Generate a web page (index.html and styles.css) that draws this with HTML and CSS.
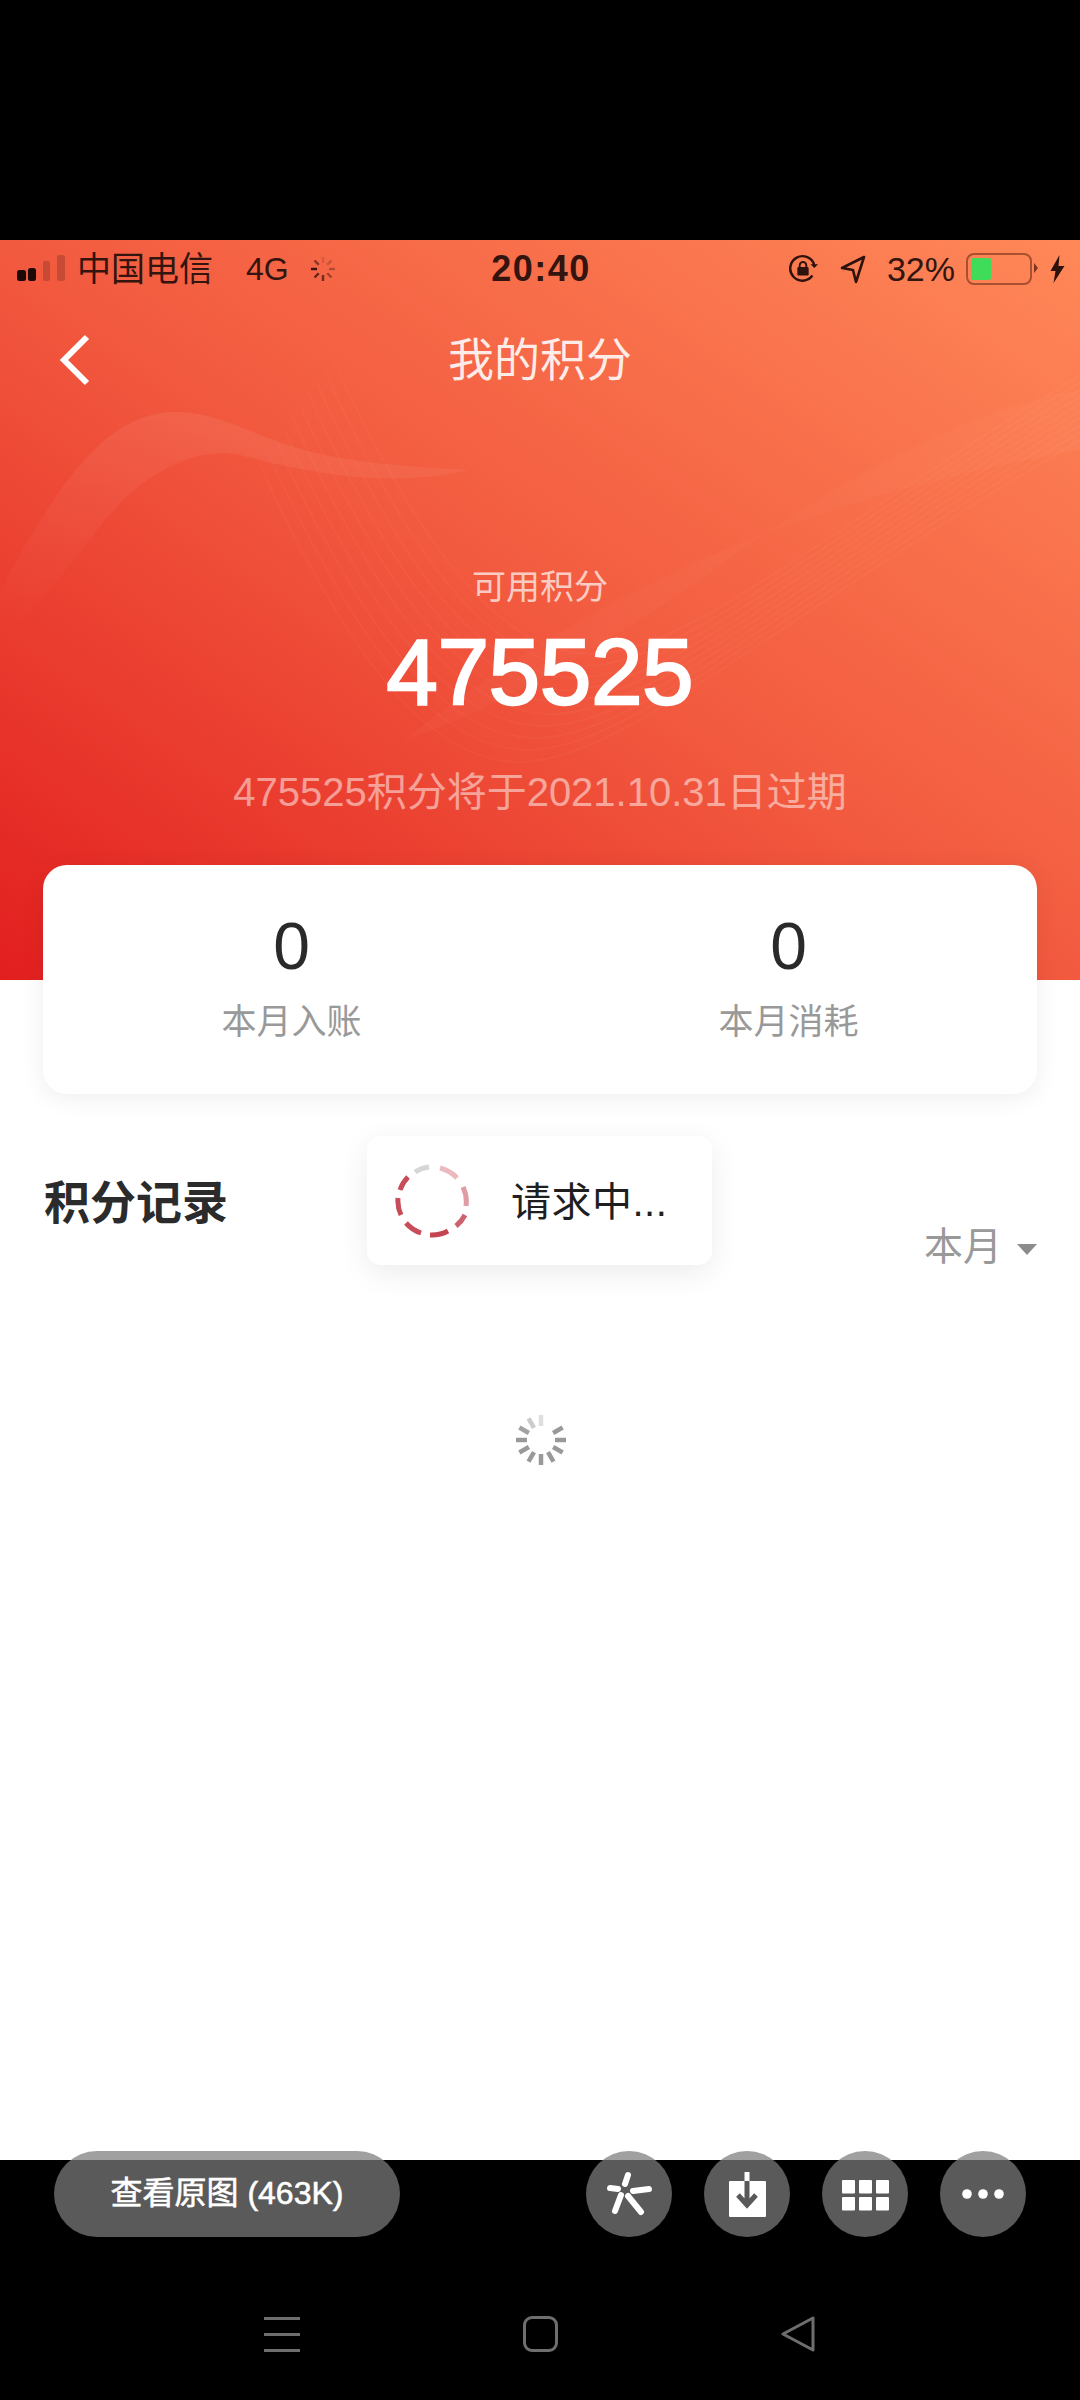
FILE: index.html
```html
<!DOCTYPE html>
<html lang="zh-CN">

<head>
  <meta charset="UTF-8" />
  <meta name="viewport" content="width=device-width, initial-scale=1.0" />
  <title>我的积分</title>
  <link rel="stylesheet" href="styles.css">
</head>

<body>
  <div class="top-gap"></div>

  <main class="sheet">
    <section class="hero">
      <svg class="waves" viewBox="0 0 1080 740" fill="none">
        <defs>
          <linearGradient id="ribbon" x1="0" y1="0" x2="0" y2="1">
            <stop offset="0" stop-color="#fff" stop-opacity=".07" />
            <stop offset="1" stop-color="#fff" stop-opacity="0" />
          </linearGradient>
          <linearGradient id="fan" x1="1" y1="1" x2="0" y2="0">
            <stop offset="0" stop-color="#fff" stop-opacity=".06" />
            <stop offset=".6" stop-color="#fff" stop-opacity=".015" />
            <stop offset="1" stop-color="#fff" stop-opacity="0" />
          </linearGradient>
          <path id="fine" d="M260 225C340 400 430 540 540 520C640 505 790 370 1080 200" stroke="#fff" stroke-opacity=".04" stroke-width="1.500" />
        </defs>
        <path d="M0 350C50 260 100 172 175 172C230 172 260 205 340 218C390 226 430 228 470 230C380 250 300 230 240 215C190 205 130 240 90 300C50 350 20 385 0 400z" fill="url(#ribbon)" />
        <path d="M403 500C560 380 740 270 1080 210V150C960 170 820 250 700 340C610 400 500 470 403 500z" fill="url(#fan)" />
        <use href="#fine" />
        <use href="#fine" transform="translate(8 -12)" />
        <use href="#fine" transform="translate(16 -24)" />
        <use href="#fine" transform="translate(24 -36)" />
        <use href="#fine" transform="translate(32 -48)" />
        <use href="#fine" transform="translate(40 -60)" />
        <use href="#fine" transform="translate(48 -72)" />
        <use href="#fine" transform="translate(56 -84)" />
        <use href="#fine" transform="translate(64 -96)" />
        <use href="#fine" transform="translate(72 -108)" />
      </svg>

      <div class="status-bar">
        <div class="status-left">
          <svg class="signal" width="48" height="28" viewBox="0 0 48 28" fill="#1c0a08">
            <rect x="0" y="15" width="9" height="11" rx="2.500" />
            <rect x="11" y="13" width="8" height="13" rx="2.500" />
            <rect x="26" y="6" width="7" height="20" rx="2" opacity=".2" />
            <rect x="40" y="0" width="8" height="26" rx="2" opacity=".2" />
          </svg>
          <span class="carrier">中国电信</span>
          <span class="net">4G</span>
          <svg class="net-spin" width="28" height="28" viewBox="-14 -14 28 28" stroke="#3a1510" stroke-width="2.400">
            <line y1="-6" y2="-12" opacity=".15" />
            <line y1="-6" y2="-12" opacity=".25" transform="rotate(45)" />
            <line y1="-6" y2="-12" opacity=".35" transform="rotate(90)" />
            <line y1="-6" y2="-12" opacity=".45" transform="rotate(135)" />
            <line y1="-6" y2="-12" opacity=".7" transform="rotate(180)" />
            <line y1="-6" y2="-12" opacity=".8" transform="rotate(225)" />
            <line y1="-6" y2="-12" transform="rotate(270)" />
            <line y1="-6" y2="-12" opacity=".6" transform="rotate(315)" />
          </svg>
        </div>
        <span class="clock">20:40</span>
        <div class="status-right">
          <svg width="32" height="32" viewBox="0 0 34 34" fill="none" stroke="#2e120d" stroke-width="2.600">
            <path d="M27 24A13 13 0 1 1 29 13" />
            <path d="M25 12l4 4 4-4" fill="#2e120d" stroke="none" />
            <rect x="11" y="15" width="12" height="9" rx="1.500" fill="#2e120d" stroke="none" />
            <path d="M13.500 15v-2a3.500 3.500 0 0 1 7 0v2" stroke-width="2" />
          </svg>
          <svg class="arrow" width="26" height="30" viewBox="0 0 26 30" fill="none" stroke="#2e120d" stroke-width="2.600" stroke-linejoin="round">
            <path d="M24 3L2 14l11 2 3 12z" />
          </svg>
          <span class="percent">32%</span>
          <div class="battery">
            <div class="battery-level"></div>
          </div>
          <svg class="bolt" width="15" height="30" viewBox="0 0 14 30" fill="#2e120d">
            <path d="M9 1L0 17h5l-2 12 11-17H8z" />
          </svg>
        </div>
      </div>

      <header class="nav">
        <svg class="back" width="30" height="52" viewBox="0 0 30 52" fill="none" stroke="#fff" stroke-width="6">
          <path d="M27 3L4 26l23 23" />
        </svg>
        <h1 class="title">我的积分</h1>
      </header>

      <div class="hero-label">可用积分</div>
      <div class="hero-value">475525</div>
      <div class="hero-note">475525积分将于2021.10.31日过期</div>
    </section>

    <section class="summary">
      <div class="summary-item">
        <div class="summary-num">0</div>
        <div class="summary-label">本月入账</div>
      </div>
      <div class="summary-item">
        <div class="summary-num">0</div>
        <div class="summary-label">本月消耗</div>
      </div>
    </section>

    <section class="records">
      <div class="records-head">
        <h2 class="records-title">积分记录</h2>
        <div class="month">本月<span class="caret"></span></div>
      </div>

      <svg class="loader" width="54" height="54" viewBox="-27 -27 54 54" stroke="#999" stroke-width="4.500">
        <line y1="-14" y2="-25" opacity=".3" />
        <line y1="-14" y2="-25" opacity=".5" transform="rotate(-30)" />
        <line y1="-14" y2="-25" opacity=".9" transform="rotate(-60)" />
        <line y1="-14" y2="-25" transform="rotate(-90)" />
        <line y1="-14" y2="-25" transform="rotate(-120)" />
        <line y1="-14" y2="-25" transform="rotate(-150)" />
        <line y1="-14" y2="-25" transform="rotate(180)" />
        <line y1="-14" y2="-25" transform="rotate(150)" />
        <line y1="-14" y2="-25" transform="rotate(120)" />
        <line y1="-14" y2="-25" transform="rotate(90)" />
        <line y1="-14" y2="-25" transform="rotate(60)" />
      </svg>

      <div class="toast">
        <svg width="74" height="74" viewBox="-37 -37 74 74" fill="none" stroke="#c23a48" stroke-width="5">
          <path d="M-17 -29A34 34 0 0 1 -3 -34" stroke="#999" opacity=".4" />
          <path d="M8 -33A34 34 0 0 1 25 -23" opacity=".35" />
          <path d="M31 -14A34 34 0 0 1 34 5" opacity=".5" />
          <path d="M33 14A34 34 0 0 1 24 25" opacity=".8" />
          <path d="M16 30A34 34 0 0 1 -2 34" opacity=".95" />
          <path d="M-11 32A34 34 0 0 1 -26 22" opacity=".9" />
          <path d="M-31 14A34 34 0 0 1 -34 -3" opacity=".9" />
          <path d="M-32 -11A34 34 0 0 1 -24 -24" opacity=".9" />
        </svg>
        <span class="toast-text">请求中...</span>
      </div>
    </section>
  </main>

  <div class="bottom">
    <div class="toolbar">
      <div class="pill">查看原图 (463K)</div>
      <div class="tools">
        <div class="tool">
          <svg width="86" height="86" viewBox="0 0 86 86" fill="none" stroke="#fff" stroke-width="6" stroke-linecap="round">
            <path d="M39 33l3-9M47 40l16-2M42 45l13 16M35 44l-6 16M32 38l-8-1" />
          </svg>
        </div>
        <div class="tool">
          <svg width="86" height="86" viewBox="0 0 86 86" fill="none">
            <rect x="25" y="30" width="37" height="36" rx="1" fill="#fff" />
            <path d="M43 21v9" stroke="#fff" stroke-width="5" />
            <path d="M43 30v24M34 44l9 10 9-10" stroke="#595959" stroke-width="5" />
          </svg>
        </div>
        <div class="tool">
          <svg width="86" height="86" viewBox="0 0 86 86" fill="#fff">
            <rect x="20" y="29" width="13" height="13.500" rx="1" />
            <rect x="37" y="29" width="13" height="13.500" rx="1" />
            <rect x="54" y="29" width="13" height="13.500" rx="1" />
            <rect x="20" y="46" width="13" height="13.500" rx="1" />
            <rect x="37" y="46" width="13" height="13.500" rx="1" />
            <rect x="54" y="46" width="13" height="13.500" rx="1" />
          </svg>
        </div>
        <div class="tool">
          <svg width="86" height="86" viewBox="0 0 86 86" fill="#fff">
            <circle cx="27" cy="43" r="4.800" />
            <circle cx="43" cy="43" r="4.800" />
            <circle cx="59" cy="43" r="4.800" />
          </svg>
        </div>
      </div>
    </div>

    <nav class="system-nav">
      <div class="menu-icon"><i></i><i></i><i></i></div>
      <div class="home-icon"></div>
      <svg width="34" height="36" viewBox="0 0 34 36" fill="none" stroke="#6e6e6e" stroke-width="3" stroke-linejoin="round">
        <path d="M2 18L32 2v32z" />
      </svg>
    </nav>
  </div>
</body>

</html>
```

FILE: styles.css
```css
html,
body {
  margin: 0;
  height: 100%;
  background: #000;
  font-family: 'Liberation Sans', 'Noto Sans CJK SC', sans-serif;
  overflow: hidden;
}

body {
  display: flex;
  flex-direction: column;
}

.top-gap {
  height: 240px;
  flex: none;
}

.sheet {
  height: 1920px;
  flex: none;
  background: #fff;
  display: flex;
  flex-direction: column;
}

.hero {
  position: relative;
  height: 740px;
  flex: none;
  text-align: center;
  color: #fff;
  background: linear-gradient(to top right, #e21f1f 0%, #f25a3f 50%, #ff8858 100%);
}

.waves {
  position: absolute;
  top: 0;
  left: 0;
  width: 100%;
  height: 100%;
}

.status-bar {
  position: relative;
  height: 60px;
  box-sizing: border-box;
  padding: 0 15px 2px 17px;
  display: grid;
  grid-template-columns: 1fr auto 1fr;
  align-items: center;
  color: #33140f;
}

.status-left {
  display: flex;
  align-items: center;
}

.carrier {
  font-size: 34px;
  line-height: 44px;
  margin-left: 12px;
}

.net {
  font-size: 32px;
  margin-left: 33px;
}

.net-spin {
  margin-left: 20px;
}

.clock {
  font-size: 36px;
  font-weight: 700;
  letter-spacing: 1.500px;
}

.status-right {
  display: flex;
  align-items: center;
  justify-content: flex-end;
}

.arrow {
  margin-left: 21px;
}

.percent {
  font-size: 34px;
  margin-left: 21px;
}

.battery {
  position: relative;
  width: 66px;
  height: 32px;
  margin-left: 11px;
  padding: 3px;
  box-sizing: border-box;
  border: 2px solid #a8502f;
  border-radius: 8px;
}

.battery-level {
  width: 20px;
  height: 100%;
  background: #3fdc5a;
  border-radius: 2px;
}

/* battery nub */
.battery::after {
  content: '';
  position: absolute;
  right: -8px;
  top: 8px;
  border-left: 4px solid #7a3420;
  border-top: 5px solid transparent;
  border-bottom: 5px solid transparent;
}

.bolt {
  margin-left: 18px;
}

.nav {
  position: relative;
  height: 120px;
  display: grid;
  grid-template-columns: 1fr auto 1fr;
  align-items: center;
  padding: 0 60px;
}

.title {
  margin: 0;
  font-size: 46px;
  font-weight: 400;
  line-height: 60px;
  color: rgba(255, 255, 255, 0.88);
}

.hero-label {
  position: relative;
  margin-top: 147px;
  font-size: 34px;
  line-height: 40px;
  color: rgba(255, 255, 255, 0.7);
}

.hero-value {
  position: relative;
  margin-top: 15px;
  font-size: 92px;
  line-height: 100px;
  -webkit-text-stroke: 2.5px #fff;
}

.hero-note {
  position: relative;
  margin-top: 45px;
  font-size: 40px;
  line-height: 50px;
  color: rgba(255, 255, 255, 0.5);
}

.summary {
  position: relative;
  margin: -115px 43px 0;
  height: 229px;
  box-sizing: border-box;
  padding: 46px 0 0;
  display: flex;
  background: #fff;
  border-radius: 24px;
  box-shadow: 0 4px 24px rgba(0, 0, 0, 0.07);
  text-align: center;
}

.summary-item {
  flex: 1;
}

.summary-num {
  font-size: 66px;
  line-height: 70px;
  color: #2a2a2a;
}

.summary-label {
  margin-top: 19px;
  font-size: 35px;
  line-height: 44px;
  color: #999;
}

.records {
  position: relative;
  flex: 1;
  padding: 81px 43px 0 44px;
}

.records-head {
  display: flex;
  justify-content: space-between;
  align-items: flex-start;
}

.records-title {
  margin: 0;
  font-size: 46px;
  font-weight: 700;
  line-height: 56px;
  color: #2b2b2b;
}

.month {
  display: flex;
  align-items: center;
  margin-top: 50px;
  font-size: 39px;
  line-height: 44px;
  color: #999;
}

.caret {
  margin-left: 15px;
  margin-top: 4px;
  border-top: 11px solid #8c8c8c;
  border-left: 10px solid transparent;
  border-right: 10px solid transparent;
}

.loader {
  display: block;
  margin: 144px auto 0;
}

.toast {
  position: absolute;
  top: 42px;
  left: 367px;
  width: 345px;
  height: 129px;
  box-sizing: border-box;
  padding-left: 28px;
  display: flex;
  align-items: center;
  background: #fff;
  border-radius: 14px;
  box-shadow: 0 8px 30px rgba(0, 0, 0, 0.08);
}

.toast-text {
  margin: -4px 0 0 42px;
  font-size: 40px;
  letter-spacing: 0.500px;
  color: #1f1f1f;
}

.bottom {
  flex: 1;
}

.toolbar {
  position: relative;
  margin-top: -9px;
  padding-left: 54px;
  display: flex;
}

.pill {
  width: 346px;
  height: 86px;
  border-radius: 43px;
  background: rgba(124, 124, 124, 0.725);
  color: #fff;
  font-size: 32px;
  line-height: 84px;
  text-align: center;
  -webkit-text-stroke: 0.6px #fff;
}

.tools {
  display: flex;
  gap: 32px;
  margin-left: 186px;
}

.tool {
  width: 86px;
  height: 86px;
  border-radius: 50%;
  background: rgba(124, 124, 124, 0.725);
}

.tool svg {
  display: block;
}

.system-nav {
  display: flex;
  align-items: center;
  gap: 223px;
  padding: 79px 0 0 264px;
}

.menu-icon {
  width: 36px;
  display: flex;
  flex-direction: column;
  gap: 13px;
}

.menu-icon i {
  height: 3px;
  background: #6e6e6e;
}

.home-icon {
  width: 35px;
  height: 36px;
  box-sizing: border-box;
  border: 3px solid #6e6e6e;
  border-radius: 9px;
}
```
